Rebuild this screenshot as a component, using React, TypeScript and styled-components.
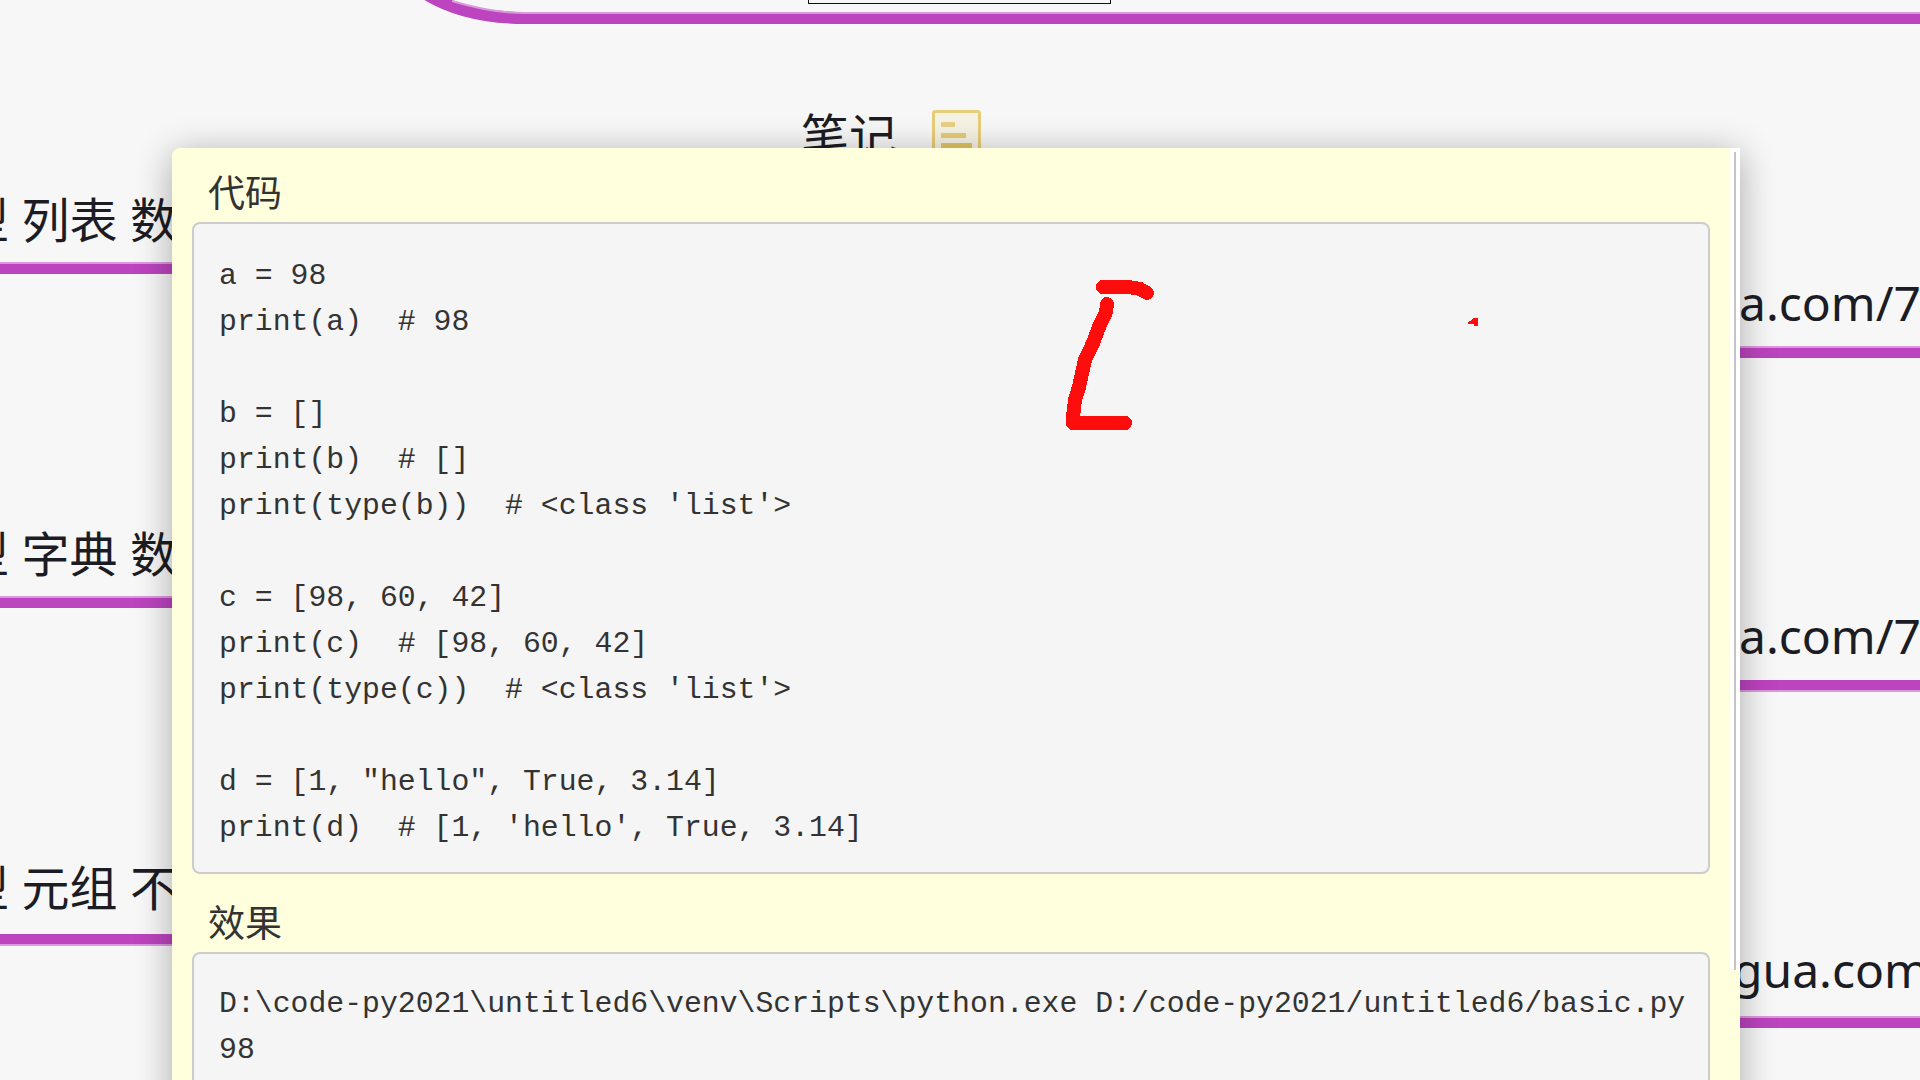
import React from "react";
import styled, { createGlobalStyle } from "styled-components";

const Global = createGlobalStyle`
  html, body { margin: 0; padding: 0; background: #f7f7f7; overflow: hidden; }
  #root { width: 1920px; height: 1080px; }
`;

const Canvas = styled.div`
  position: relative;
  width: 1920px;
  height: 1080px;
  overflow: hidden;
  background: #f7f7f7;
  font-family: "Noto Sans", "Noto Sans CJK SC", sans-serif;
`;

const Drawing = styled.svg`
  position: absolute;
  left: 0;
  top: 0;
  pointer-events: none;
`;

const FrameStub = styled.div`
  position: absolute;
  left: 808px;
  top: -10px;
  width: 301px;
  height: 12px;
  border: 1px solid #111;
`;

const MapNode = styled.div<{ $x: number; $y: number; $w: number; $gap: number }>`
  position: absolute;
  left: ${(p) => p.$x}px;
  top: ${(p) => p.$y}px;
  width: ${(p) => p.$w}px;
  display: flex;
  flex-direction: column;
  gap: ${(p) => p.$gap}px;
`;

const NodeRow = styled.div`
  display: flex;
  align-items: flex-start;
  gap: 35px;
`;

const NodeText = styled.div`
  font-size: 48px;
  line-height: 64px;
  color: #1c1c24;
  white-space: pre;
`;

const Branch = styled.div<{ $light: "top" | "bottom" }>`
  height: 12px;
  box-sizing: border-box;
  background: #bc44bf;
  border-${(p) => p.$light}: 2px solid #dc98dd;
`;

const NoteIcon = styled.svg`
  flex: none;
  margin-top: 6px;
`;

const Popup = styled.section`
  position: absolute;
  left: 172px;
  top: 148px;
  width: 1568px;
  height: 1100px;
  box-sizing: border-box;
  padding: 14px 30px 0 20px;
  background: #ffffdd;
  border-radius: 8px 0 0 0;
  box-shadow: 0 6px 36px rgba(0, 0, 0, 0.32);
`;

const Label = styled.h4`
  margin: 0;
  padding-left: 16px;
  height: 60px;
  font-size: 37px;
  font-weight: 400;
  line-height: 58px;
  color: #333;
  font-family: "Noto Sans CJK SC", sans-serif;
`;

const Section = styled.div`
  & + & {
    margin-top: 18px;
  }
`;

const Code = styled.pre<{ $top: number }>`
  margin: 0;
  box-sizing: border-box;
  padding: ${(p) => p.$top}px 24px 21px 25px;
  background: #f5f5f5;
  border: 2px solid #cccccc;
  border-radius: 8px;
  font-family: "Liberation Mono", monospace;
  font-size: 29.8px;
  line-height: 46px;
  color: #333;
  white-space: pre;
`;

const ScrollStrip = styled.div`
  position: absolute;
  right: 0;
  top: 0;
  width: 10px;
  height: 822px;
  box-sizing: border-box;
  padding: 4px 4px 0 4px;
  background: #ffffff;
`;

const ScrollLine = styled.div`
  width: 2px;
  height: 100%;
  background: #c4c4c4;
`;

const codeText = `a = 98
print(a)  # 98

b = []
print(b)  # []
print(type(b))  # <class 'list'>

c = [98, 60, 42]
print(c)  # [98, 60, 42]
print(type(c))  # <class 'list'>

d = [1, "hello", True, 3.14]
print(d)  # [1, 'hello', True, 3.14]`;

const resultText = `D:\\code-py2021\\untitled6\\venv\\Scripts\\python.exe D:/code-py2021/untitled6/basic.py
98
[]
<class 'list'>`;

export default function App() {
  return (
    <Canvas>
      <Global />
      <Drawing width={1920} height={40} viewBox="0 0 1920 40">
        <path d="M 426 -6 C 452 10, 485 18, 525 18 H 1920" fill="none" stroke="#bc44bf" strokeWidth={12} />
        <path d="M 452 1 C 475 8, 497 13, 525 13 H 1920" fill="none" stroke="#dc98dd" strokeWidth={2} />
      </Drawing>
      <FrameStub />

      <MapNode $x={801} $y={104} $w={240} $gap={0}>
        <NodeRow>
          <NodeText>笔记</NodeText>
          <NoteIcon width={49} height={60} viewBox="0 0 49 60">
            <rect x="1.5" y="1.5" width="46" height="60" rx="2" fill="#f6f3e4" stroke="#e6cd78" strokeWidth={3} />
            <rect x="9" y="12" width="14" height="5" fill="#e8d08a" />
            <rect x="9" y="23" width="25" height="5" fill="#e6cb78" />
            <rect x="9" y="33" width="31" height="5" fill="#e3c463" />
          </NoteIcon>
        </NodeRow>
      </MapNode>

      <MapNode $x={-39} $y={188} $w={440} $gap={10}>
        <NodeText>型 列表 数据类型</NodeText>
        <Branch $light="top" />
      </MapNode>
      <MapNode $x={-39} $y={522} $w={440} $gap={10}>
        <NodeText>型 字典 数据类型</NodeText>
        <Branch $light="top" />
      </MapNode>
      <MapNode $x={-39} $y={856} $w={440} $gap={14}>
        <NodeText>型 元组 不可变</NodeText>
        <Branch $light="bottom" />
      </MapNode>

      <MapNode $x={1739} $y={271} $w={181} $gap={11}>
        <NodeText>a.com/7</NodeText>
        <Branch $light="top" />
      </MapNode>
      <MapNode $x={1739} $y={604} $w={181} $gap={12}>
        <NodeText>a.com/7</NodeText>
        <Branch $light="bottom" />
      </MapNode>
      <MapNode $x={1733} $y={938} $w={187} $gap={14}>
        <NodeText>gua.com</NodeText>
        <Branch $light="top" />
      </MapNode>

      <Popup>
        <Section>
          <Label>代码</Label>
          <Code $top={29}>{codeText}</Code>
        </Section>
        <Section>
          <Label>效果</Label>
          <Code $top={27}>{resultText}</Code>
        </Section>
        <ScrollStrip>
          <ScrollLine />
        </ScrollStrip>
      </Popup>

      <Drawing width={1920} height={1080} viewBox="0 0 1920 1080">
        <g fill="none" stroke="#ff0c0c" strokeWidth={14} strokeLinecap="round" strokeLinejoin="round" shapeRendering="crispEdges">
          <path d="M 1103 287 L 1128 287 L 1140 289 L 1147 293" />
          <path d="M 1107 304 L 1106 312 L 1099 327 L 1093 343 L 1085 360 L 1079 387 L 1075 400 L 1073 417 L 1073 423 L 1125 423" />
        </g>
        <polygon points="1468,324 1468,322 1472,320 1473,318 1478,318 1478,326 1474,326 1474,324" fill="#ff0c0c" shapeRendering="crispEdges" />
      </Drawing>
    </Canvas>
  );
}
